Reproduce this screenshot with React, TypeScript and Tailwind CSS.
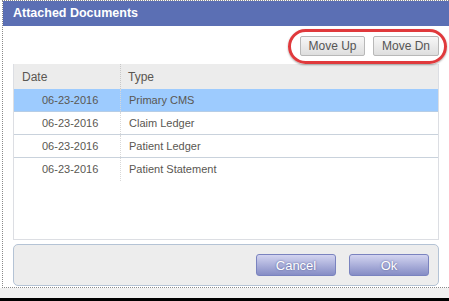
import React from "react"

const rows = [
  { date: "06-23-2016", type: "Primary CMS", selected: true },
  { date: "06-23-2016", type: "Claim Ledger" },
  { date: "06-23-2016", type: "Patient Ledger" },
  { date: "06-23-2016", type: "Patient Statement" },
]

export default function App() {
  return (
    <div className="relative w-[449px] h-[301px] overflow-hidden bg-white font-['Liberation_Sans',Arial,sans-serif]">
      <div className="ml-[2px] w-[447px] h-[288px] border-l border-t border-b border-dotted border-[#8a8a8a] flex flex-col">
        <div className="h-[25px] shrink-0 bg-[#5b6fb4] pl-[10px] flex items-center text-white font-bold text-[12.5px]">
          Attached Documents
        </div>

        <div className="flex-1 flex flex-col pl-[10px] pr-[10px] pt-[10px]">
          <div className="flex justify-end gap-[8px] h-[20px]">
            <button className="w-[65px] h-[20px] rounded-[2px] border border-[#b8b8b8] bg-gradient-to-b from-[#f7f7f7] to-[#dedede] text-[12px] text-[#555] leading-none">
              Move Up
            </button>
            <button className="w-[66px] h-[20px] rounded-[2px] border border-[#b8b8b8] bg-gradient-to-b from-[#f7f7f7] to-[#dedede] text-[12px] text-[#555] leading-none">
              Move Dn
            </button>
          </div>

          <div className="mt-[8px] h-[176px] border-l border-b border-r border-[#dcdee3] flex flex-col">
            <div className="h-[25px] bg-[#ececec] flex text-[12px] text-[#5a5752]">
              <div className="w-[107px] pl-[8px] flex items-center border-r border-dotted border-[#c8c8c8]">Date</div>
              <div className="flex-1 pl-[7px] flex items-center">Type</div>
            </div>
            {rows.map((r, i) => (
              <div
                key={i}
                className={
                  r.selected
                    ? "h-[23px] flex text-[11px] text-[#5a5752] bg-[#9dcbfe] border-b border-[#b6cde6]"
                    : "h-[23px] flex text-[11px] text-[#5a5752] border-b border-[#c9d2dc] last:border-b-0"
                }
              >
                <div className="w-[107px] pl-[28px] flex items-center border-r border-dotted border-[#d8d8d8]">{r.date}</div>
                <div className="flex-1 pl-[8px] flex items-center">{r.type}</div>
              </div>
            ))}
          </div>

          <div className="mt-[4px] h-[42px] rounded-[5px] border border-[#b4c3d5] bg-[#ededed] flex items-center justify-end gap-[13px] pr-[9px]">
            <button className="w-[80px] h-[22px] rounded-[3px] border border-[#7a83bf] bg-gradient-to-b from-[#d3d4f0] to-[#868dc5] text-white text-[13px] leading-none [text-shadow:0_0_2px_#4f5690]">
              Cancel
            </button>
            <button className="w-[80px] h-[22px] rounded-[3px] border border-[#7a83bf] bg-gradient-to-b from-[#d3d4f0] to-[#868dc5] text-white text-[13px] leading-none [text-shadow:0_0_2px_#4f5690]">
              Ok
            </button>
          </div>
        </div>
      </div>

      <div className="h-[10px] bg-[#f0f0f0]" />
      <div className="h-[3px] bg-black" />

      <div className="absolute left-[288px] top-[29px] w-[159px] h-[35px] rounded-[18px] border-[3px] border-[#e0393c] shadow-[0_1px_2px_rgba(0,0,0,0.35)]" />
    </div>
  )
}
